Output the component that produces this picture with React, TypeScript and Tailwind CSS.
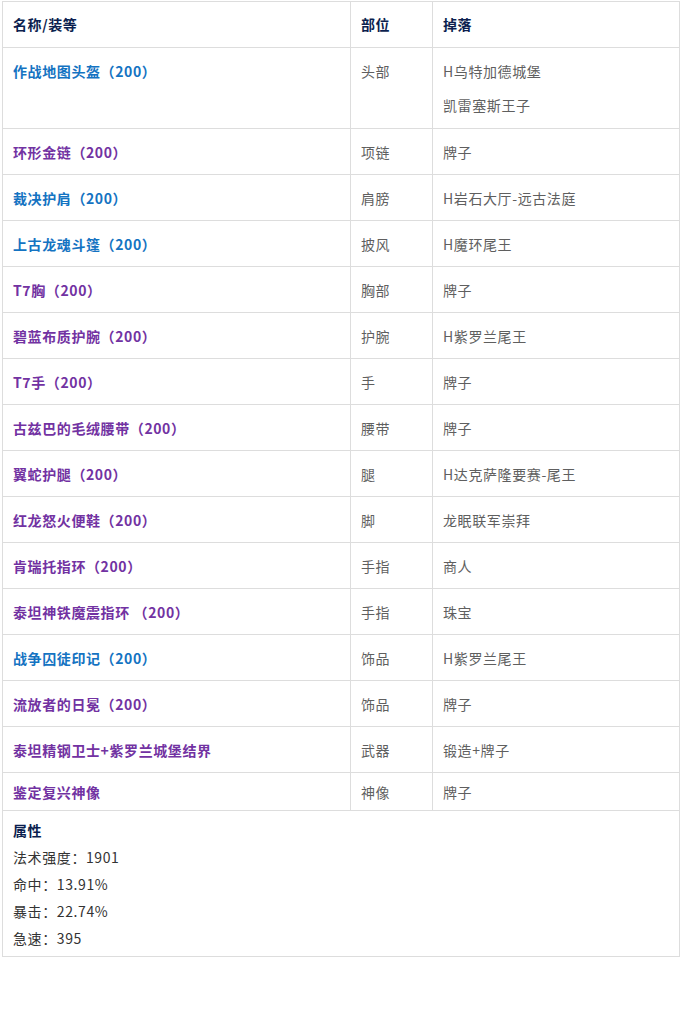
const BLUE = "blue";
const PURPLE = "purple";

type Item = {
  name: string;
  color: "blue" | "purple";
  slot: string;
  drops: string[];
};

const items: Item[] = [
  { name: "作战地图头盔（200）", color: BLUE, slot: "头部", drops: ["H乌特加德城堡", "凯雷塞斯王子"] },
  { name: "环形金链（200）", color: PURPLE, slot: "项链", drops: ["牌子"] },
  { name: "裁决护肩（200）", color: BLUE, slot: "肩膀", drops: ["H岩石大厅-远古法庭"] },
  { name: "上古龙魂斗篷（200）", color: BLUE, slot: "披风", drops: ["H魔环尾王"] },
  { name: "T7胸（200）", color: PURPLE, slot: "胸部", drops: ["牌子"] },
  { name: "碧蓝布质护腕（200）", color: PURPLE, slot: "护腕", drops: ["H紫罗兰尾王"] },
  { name: "T7手（200）", color: PURPLE, slot: "手", drops: ["牌子"] },
  { name: "古兹巴的毛绒腰带（200）", color: PURPLE, slot: "腰带", drops: ["牌子"] },
  { name: "翼蛇护腿（200）", color: PURPLE, slot: "腿", drops: ["H达克萨隆要赛-尾王"] },
  { name: "红龙怒火便鞋（200）", color: PURPLE, slot: "脚", drops: ["龙眠联军崇拜"] },
  { name: "肯瑞托指环（200）", color: PURPLE, slot: "手指", drops: ["商人"] },
  { name: "泰坦神铁魔震指环 （200）", color: PURPLE, slot: "手指", drops: ["珠宝"] },
  { name: "战争囚徒印记（200）", color: BLUE, slot: "饰品", drops: ["H紫罗兰尾王"] },
  { name: "流放者的日冕（200）", color: PURPLE, slot: "饰品", drops: ["牌子"] },
  { name: "泰坦精钢卫士+紫罗兰城堡结界", color: PURPLE, slot: "武器", drops: ["锻造+牌子"] },
  { name: "鉴定复兴神像", color: PURPLE, slot: "神像", drops: ["牌子"] },
];

const stats = ["法术强度：1901", "命中：13.91%", "暴击：22.74%", "急速：395"];

export default function App() {
  return (
    <div
      className="w-[680px] h-[1013px] bg-white pt-px pl-[2px] text-[14px] tracking-[0.6px]"
      style={{ fontFamily: '"Noto Sans CJK SC", "Noto Sans", sans-serif' }}
    >
      <table className="w-[677px] border-collapse table-fixed">
        <colgroup>
          <col className="w-[348px]" />
          <col className="w-[82px]" />
          <col className="w-[247px]" />
        </colgroup>
        <thead>
          <tr>
            <th className="border border-[#dddddd] h-[46px] px-[10px] text-left font-bold text-[#0c1f4f]">
              名称/装等
            </th>
            <th className="border border-[#dddddd] px-[10px] text-left font-bold text-[#0c1f4f]">
              部位
            </th>
            <th className="border border-[#dddddd] px-[10px] text-left font-bold text-[#0c1f4f]">
              掉落
            </th>
          </tr>
        </thead>
        <tbody>
          {items.map((item, i) => {
            const last = i === items.length - 1;
            const pad = last
              ? "pt-[7px] pb-[6px]"
              : i === 0
                ? "pt-[11px] pb-[11px]"
                : "pt-[11px] pb-[10px]";
            return (
              <tr key={item.name}>
                <td className={`border border-[#dddddd] px-[10px] align-top ${pad}`}>
                  <p
                    className={`leading-[24px] font-bold ${
                      item.color === BLUE ? "text-[#1473c2]" : "text-[#7232a2]"
                    }`}
                  >
                    {item.name}
                  </p>
                </td>
                <td className={`border border-[#dddddd] px-[10px] align-top text-[#5f5f5f] ${pad}`}>
                  <p className="leading-[24px]">{item.slot}</p>
                </td>
                <td className={`border border-[#dddddd] px-[10px] align-top text-[#5f5f5f] ${pad}`}>
                  {item.drops.map((d, j) => (
                    <p key={d} className={`leading-[24px] ${j > 0 ? "mt-[10px]" : ""}`}>
                      {d}
                    </p>
                  ))}
                </td>
              </tr>
            );
          })}
          <tr>
            <td colSpan={3} className="border border-[#dddddd] px-[10px] pt-[7px] pb-[6px] align-top">
              <p className="leading-[24px] font-bold text-[#0c1f4f]">属性</p>
              {stats.map((s) => (
                <p key={s} className="leading-[24px] mt-[3px] text-[#333333]">
                  {s}
                </p>
              ))}
            </td>
          </tr>
        </tbody>
      </table>
    </div>
  );
}
